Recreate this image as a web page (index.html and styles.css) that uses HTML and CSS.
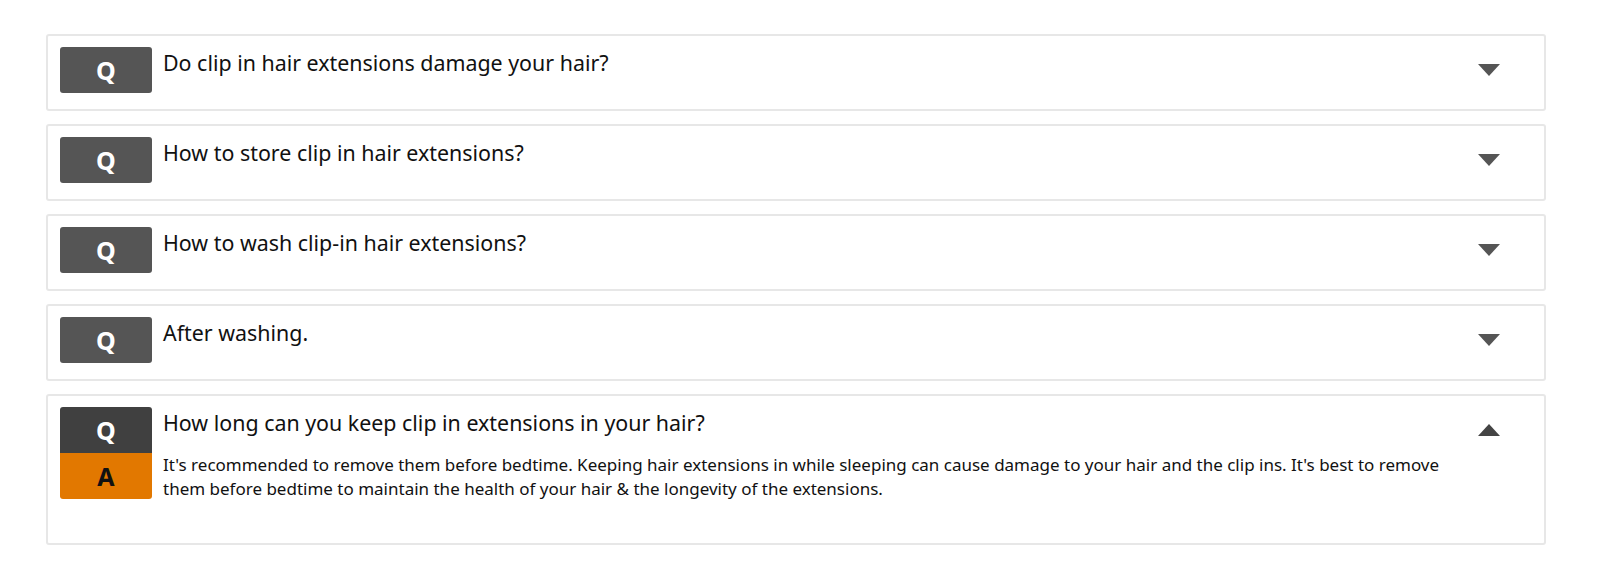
FILE: index.html
```html
<!DOCTYPE html>
<html lang="en">

<head>
    <meta charset="UTF-8" />
    <meta name="viewport" content="width=device-width, initial-scale=1.0" />
    <title>Clip-in Hair Extensions FAQ</title>
    <link rel="stylesheet" href="styles.css">
</head>

<body>
    <section class="faq-list">
        <div class="faq-item">
            <div class="badges">
                <span class="badge badge-q">Q</span>
            </div>
            <div class="faq-body">
                <p class="question">Do clip in hair extensions damage your hair?</p>
            </div>
            <span class="arrow arrow-down"></span>
        </div>

        <div class="faq-item">
            <div class="badges">
                <span class="badge badge-q">Q</span>
            </div>
            <div class="faq-body">
                <p class="question">How to store clip in hair extensions?</p>
            </div>
            <span class="arrow arrow-down"></span>
        </div>

        <div class="faq-item">
            <div class="badges">
                <span class="badge badge-q">Q</span>
            </div>
            <div class="faq-body">
                <p class="question">How to wash clip-in hair extensions?</p>
            </div>
            <span class="arrow arrow-down"></span>
        </div>

        <div class="faq-item">
            <div class="badges">
                <span class="badge badge-q">Q</span>
            </div>
            <div class="faq-body">
                <p class="question">After washing.</p>
            </div>
            <span class="arrow arrow-down"></span>
        </div>

        <div class="faq-item open">
            <div class="badges">
                <span class="badge badge-q">Q</span>
                <span class="badge badge-a">A</span>
            </div>
            <div class="faq-body">
                <p class="question">How long can you keep clip in extensions in your hair?</p>
                <p class="answer">It's recommended to remove them before bedtime. Keeping hair extensions in while sleeping can cause damage to your hair and the clip ins. It's best to remove them before bedtime to maintain the health of your hair &amp; the longevity of the extensions.</p>
            </div>
            <span class="arrow arrow-up"></span>
        </div>
    </section>
</body>

</html>
```

FILE: styles.css
```css
* {
    margin: 0;
    padding: 0;
    box-sizing: border-box;
}

body {
    background: #fff;
    color: #111;
    font-family: "Noto Sans", "Open Sans", sans-serif;
}

.faq-list {
    display: flex;
    flex-direction: column;
    gap: 13px;
    width: 1500px;
    margin: 34px 0 0 46px;
}

.faq-item {
    display: grid;
    grid-template-columns: 92px 1fr 22px;
    column-gap: 11px;
    padding: 11px 44px 16px 12px;
    border: 2px solid #e7e7e7;
    border-radius: 3px;
}

.faq-item.open {
    padding-bottom: 42px;
}

.badges {
    display: flex;
    flex-direction: column;
}

.badge {
    display: flex;
    align-items: center;
    justify-content: center;
    height: 46px;
    font-size: 25px;
    font-weight: bold;
    border-radius: 3px;
}

.badge-q {
    background: #555;
    color: #fff;
}

.open .badge-q {
    background: #404040;
    border-radius: 3px 3px 0 0;
}

.badge-a {
    background: #e27800;
    color: #111;
    border-radius: 0 0 3px 3px;
}

.faq-body {
    padding-right: 16px;
}

.question {
    padding-top: 2px;
    font-size: 21.4px;
    line-height: 28px;
}

.answer {
    margin-top: 16px;
    font-size: 17px;
    line-height: 24px;
}

.arrow {
    width: 0;
    height: 0;
    margin-top: 17px;
    border-left: 11px solid transparent;
    border-right: 11px solid transparent;
}

.arrow-down {
    border-top: 12px solid #555;
}

.arrow-up {
    border-bottom: 12px solid #444;
}
```
